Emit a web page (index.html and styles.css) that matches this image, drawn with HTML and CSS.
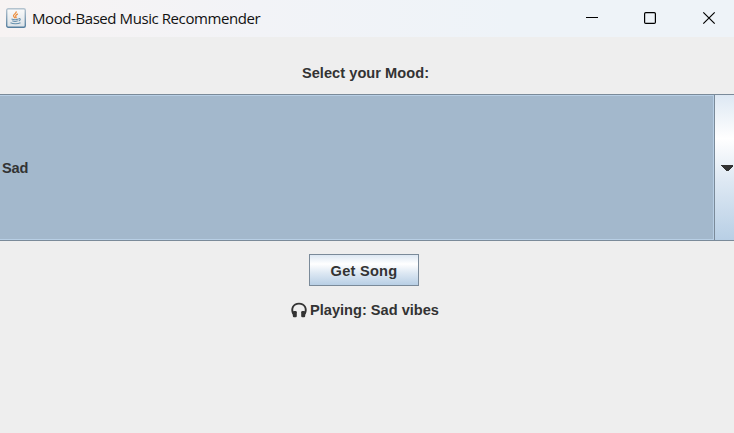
FILE: index.html
```html
<!DOCTYPE html>
<html lang="en">
<head>
<meta charset="utf-8">
<title>Mood-Based Music Recommender</title>
<link rel="stylesheet" href="styles.css">
</head>
<body>
<div class="window">
  <header class="titlebar">
    <svg class="app-icon" viewBox="0 0 20 20" width="20" height="20">
      <defs>
        <linearGradient id="frame" x1="0" y1="0" x2="0" y2="1"><stop offset="0" stop-color="#b4c3cf"/><stop offset="1" stop-color="#567f9f"/></linearGradient>
        <linearGradient id="face" x1="0" y1="0" x2="0" y2="1"><stop offset="0" stop-color="#fafafa"/><stop offset="1" stop-color="#dce2e7"/></linearGradient>
      </defs>
      <rect x=".7" y=".7" width="18.6" height="18.6" rx="1.5" fill="url(#face)" stroke="url(#frame)" stroke-width="1.4"/>
      <path d="M10.2 3.400c.7 2-2.800 2.700-2.700 4.400.1 1 1 1.600 1.700 2.200M11.800 5.900C9.600 7 9.200 7.900 10 9c.4.6.1 1-.3 1.300" fill="none" stroke="#ec8a36" stroke-width="1.200"/>
      <path d="M5.500 11c2 .8 5 .8 7 0M6.300 12.800c1.500.7 4 .7 5.400 0M12.700 10.600c2-.5 2.200 1.500 0 2.300M4.500 14.800c2.500 1.300 7.500 1.300 10 0" fill="none" stroke="#6690ae" stroke-width="1.100"/>
    </svg>
    <span class="title">Mood-Based Music Recommender</span>
    <svg class="controls" viewBox="0 0 150 38" width="150" height="38" fill="none" stroke="#000">
      <path d="M2 17.500h12" stroke-width="1"/>
      <rect x="60.600" y="12.600" width="10.800" height="10.800" rx="1.200" stroke-width="1.200"/>
      <path d="M119.300 12.300l11.400 11.400M130.700 12.300l-11.400 11.400" stroke-width="1.200"/>
    </svg>
  </header>
  <main class="content">
    <div class="prompt"><span class="prompt-text">Select your Mood:</span></div>
    <div class="combo">
      <div class="combo-value"><span class="combo-text">Sad</span></div>
      <div class="combo-arrow">
        <svg viewBox="0 0 12 6" width="12" height="6" shape-rendering="crispEdges"><path d="M0 0h12v1L7 6H5L0 1z" fill="#333"/></svg>
      </div>
    </div>
    <button class="get-song"><span class="button-text">Get Song</span></button>
    <div class="status">
      <svg class="headphones" viewBox="0 0 16 16" width="16" height="16">
        <path d="M2.300 12C-.2 7 2 1.600 8 1.600S16.200 7 13.700 12" fill="none" stroke="#333" stroke-width="1.900"/>
        <rect x="1.800" y="9" width="4" height="6.300" rx="1.200" fill="#333"/>
        <rect x="10.200" y="9" width="4" height="6.300" rx="1.200" fill="#333"/>
      </svg>
      <span class="status-text">Playing: Sad vibes</span>
    </div>
  </main>
</div>
</body>
</html>
```
FILE: styles.css
```css
* { box-sizing: border-box; }
body {
  margin: 0;
  background: #eee;
  color: #333;
  font: bold 14.6px/18px "Liberation Sans", Arial, sans-serif;
}
.window {
  width: 734px;
  height: 433px;
  overflow: hidden;
  background: #eee;
}
.titlebar {
  display: flex;
  align-items: flex-start;
  height: 37px;
  padding-left: 6px;
  background: linear-gradient(90deg, #f7f3f3 0%, #f2f3f7 35%, #eef3f8 70%, #eef3f8 100%);
}
.app-icon { margin-top: 8px; }
.title {
  margin: 8px 0 0 6px;
  color: #111;
  font: 15px/20px "Open Sans", "Noto Sans", sans-serif;
  letter-spacing: -0.42px;
  white-space: nowrap;
}
.controls { margin-left: auto; }
.content {
  display: flex;
  flex-direction: column;
  align-items: center;
}
.prompt {
  height: 57px;
  padding: 27px 3px 0 0;
  letter-spacing: 0.04px;
}
.combo {
  display: flex;
  width: 100%;
  height: 147px;
  border-top: 1px solid #7a8a99;
  border-bottom: 1px solid #7a8a99;
}
.combo-value {
  display: flex;
  flex: 1;
  align-items: center;
  padding-left: 2px;
  border: 1px solid #b8cfe5;
  border-left: 0;
  background: #a3b8cc;
}
.combo-text { letter-spacing: -0.2px; }
.combo-arrow {
  display: flex;
  width: 20px;
  align-items: center;
  justify-content: flex-end;
  padding-right: 1px;
  border-left: 1px solid #7a8a99;
  background: linear-gradient(#dde8f3 0%, #fff 30%, #dde8f3 60%, #b8cfe5 100%);
}
.get-song {
  width: 110px;
  height: 32px;
  margin: 13px 6px 0 0;
  padding: 2px 0 0;
  border: 1px solid #7a8a99;
  background: linear-gradient(#dde8f3 0%, #fff 30%, #dde8f3 60%, #b8cfe5 100%);
  color: #333;
  font: inherit;
  letter-spacing: 0.25px;
}
.status {
  display: flex;
  align-items: center;
  gap: 3px;
  margin: 15px 4px 0 0;
}
```
